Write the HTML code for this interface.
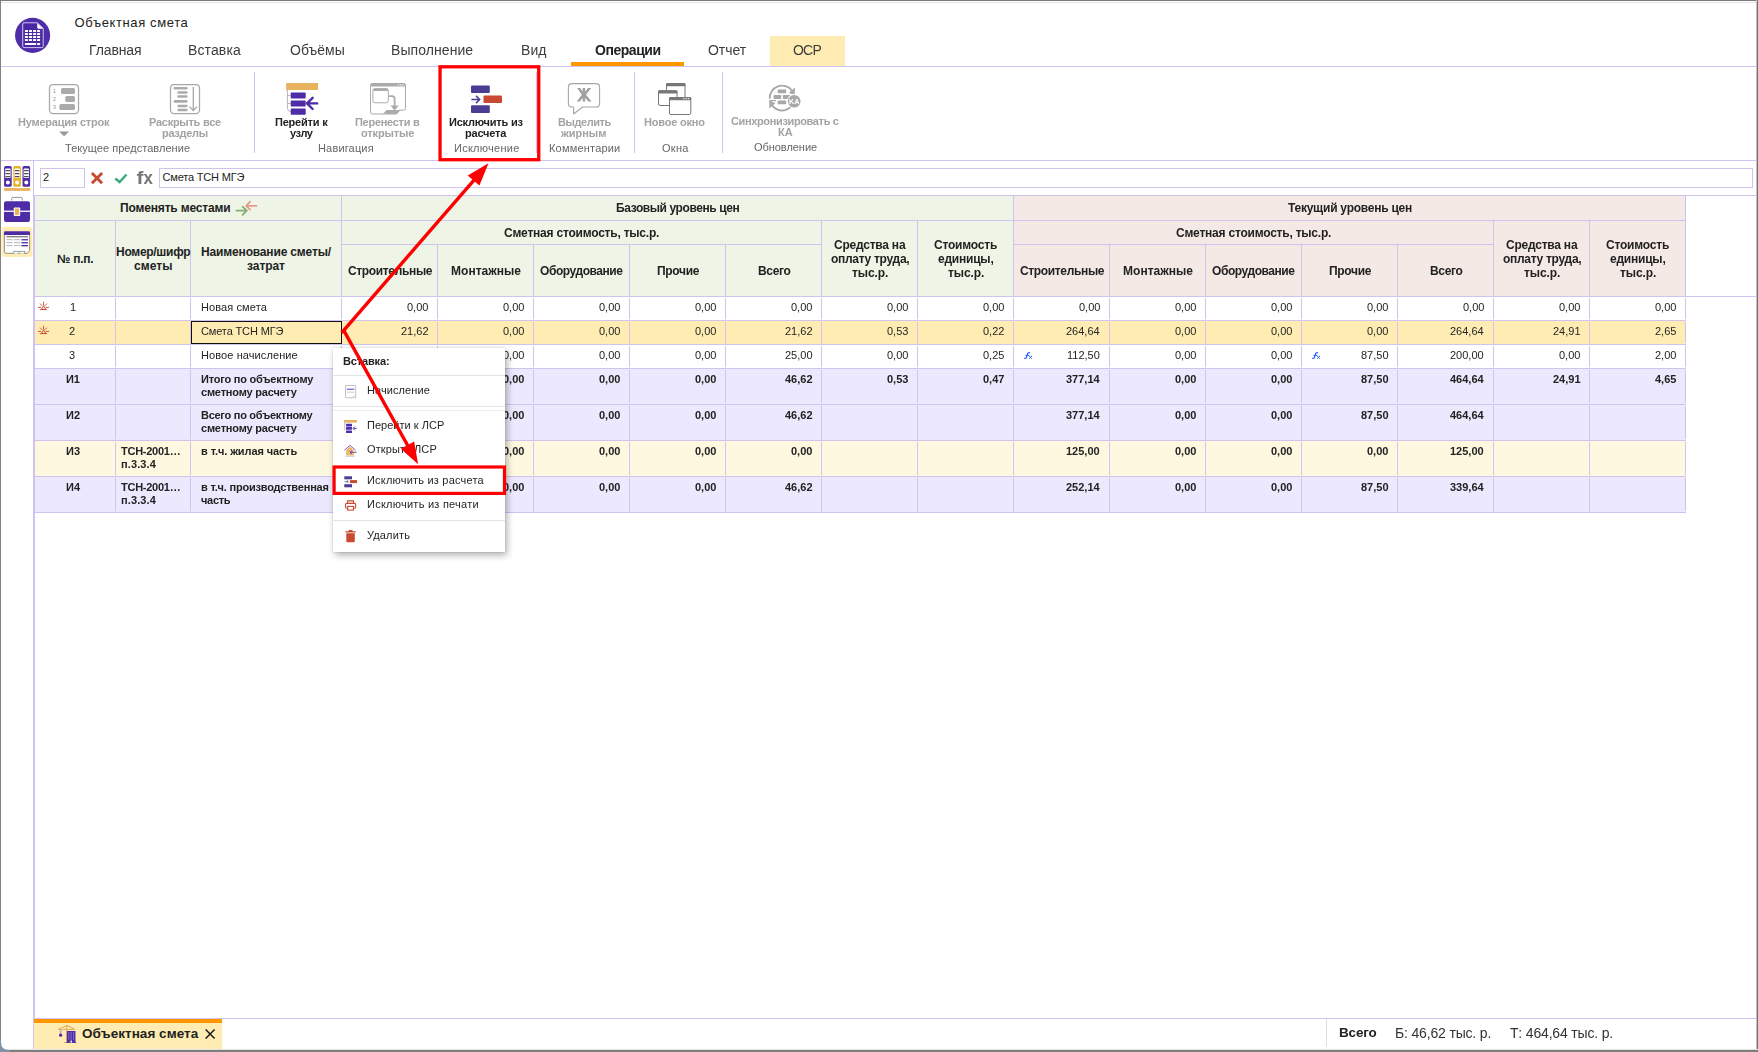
<!DOCTYPE html>
<html><head><meta charset="utf-8"><title>Объектная смета</title>
<style>
html,body{margin:0;padding:0;}
body{width:1758px;height:1052px;overflow:hidden;background:#fff;font-family:"Liberation Sans", sans-serif;position:relative;}
div,span,svg{position:absolute;box-sizing:border-box;}
.t{white-space:pre;display:block;}
.g{will-change:transform;}
</style></head><body>
<div style="left:0px;top:0px;width:1758px;height:1px;background:#787878;"></div>
<div style="left:0px;top:2px;width:1758px;height:1px;background:#e5e7e5;"></div>
<div style="left:0px;top:0px;width:1px;height:1052px;background:#828282;"></div>
<div style="left:1756px;top:0px;width:1px;height:1052px;background:#c4c4c4;"></div>
<div style="left:1757px;top:0px;width:1px;height:1052px;background:#707070;"></div>
<div style="left:0px;top:1049px;width:1758px;height:1px;background:#e4e4e4;"></div>
<div style="left:0px;top:1050px;width:1758px;height:2px;background:#7e7e7e;"></div>
<svg style="left:0;top:1040px" width="10" height="12" viewBox="0 0 10 12"><path d="M0 0 V12 H10 V10 H9 Q1 10 1 2 V0 Z" fill="#8092a6"/><path d="M0 0 H1 V2 Q1 10 9 10 H10 V12 H0 Z" fill="none"/></svg>
<svg style="left:0;top:0" width="64" height="64" viewBox="0 0 64 64">
<circle cx="32.6" cy="35.4" r="17.55" fill="#4f2ca8"/>
<path d="M24.2 28.8 H38 L37.4 23.6 H24.2 Z M24.2 28.6 H42.8 V47 H24.2 Z" fill="#4424a0" opacity="0.55"/>
<path d="M23.9 22.8 H37.3 L43.2 28.4 V46.3 Q43.2 47.6 41.9 47.6 H23.9 Q22.7 47.6 22.7 46.3 V24 Q22.7 22.8 23.9 22.8 Z" fill="none" stroke="#cfc4ea" stroke-width="1"/>
<path d="M37.2 22.9 L43.3 28.7 H38.3 Q37.2 28.7 37.2 27.6 Z" fill="#fff"/>
<g fill="#fff"><rect x="24.9" y="29.9" width="3.1" height="2" rx="0.4"/><rect x="28.95" y="29.9" width="3.1" height="2" rx="0.4"/><rect x="33.0" y="29.9" width="3.1" height="2" rx="0.4"/><rect x="37.0" y="29.9" width="3.1" height="2" rx="0.4"/><rect x="24.9" y="33.0" width="3.1" height="2" rx="0.4"/><rect x="28.95" y="33.0" width="3.1" height="2" rx="0.4"/><rect x="33.0" y="33.0" width="3.1" height="2" rx="0.4"/><rect x="37.0" y="33.0" width="3.1" height="2" rx="0.4"/><rect x="24.9" y="36.05" width="3.1" height="2" rx="0.4"/><rect x="28.95" y="36.05" width="3.1" height="2" rx="0.4"/><rect x="33.0" y="36.05" width="3.1" height="2" rx="0.4"/><rect x="37.0" y="36.05" width="3.1" height="2" rx="0.4"/><rect x="24.9" y="39.1" width="3.1" height="2" rx="0.4"/><rect x="28.95" y="39.1" width="3.1" height="2" rx="0.4"/><rect x="33.0" y="39.1" width="3.1" height="2" rx="0.4"/><rect x="37.0" y="39.1" width="3.1" height="2" rx="0.4"/><rect x="24.9" y="43" width="11.2" height="2" rx="0.4"/><rect x="37" y="43" width="3.1" height="2" rx="0.4"/></g>
</svg>
<span class="t" style="left:74.55px;top:15px;font-size:13px;line-height:15px;height:15px;color:#222;letter-spacing:0.620px;">Объектная смета</span>
<span class="t g" style="left:88.81px;top:42px;font-size:14px;line-height:16px;height:16px;color:#3c3c3c;letter-spacing:-0.117px;">Главная</span>
<span class="t g" style="left:188.21px;top:42px;font-size:14px;line-height:16px;height:16px;color:#3c3c3c;letter-spacing:0.119px;">Вставка</span>
<span class="t g" style="left:289.51px;top:42px;font-size:14px;line-height:16px;height:16px;color:#3c3c3c;letter-spacing:0.018px;">Объёмы</span>
<span class="t g" style="left:391.31px;top:42px;font-size:14px;line-height:16px;height:16px;color:#3c3c3c;letter-spacing:0.070px;">Выполнение</span>
<span class="t g" style="left:520.71px;top:42px;font-size:14px;line-height:16px;height:16px;color:#3c3c3c;letter-spacing:0.084px;">Вид</span>
<div style="left:571px;top:62px;width:113px;height:4px;background:#ff9800;"></div>
<span class="t g" style="left:594.51px;top:42px;font-size:14px;line-height:16px;height:16px;color:#222;font-weight:700;letter-spacing:-0.465px;">Операции</span>
<span class="t g" style="left:707.51px;top:42px;font-size:14px;line-height:16px;height:16px;color:#3c3c3c;letter-spacing:-0.033px;">Отчет</span>
<div style="left:770px;top:36px;width:75px;height:30px;background:#ffecb3;"></div>
<span class="t g" style="left:793.31px;top:42px;font-size:14px;line-height:16px;height:16px;color:#3c3c3c;letter-spacing:-0.788px;">ОСР</span>
<div style="left:1px;top:66px;width:1755px;height:1px;background:#d0c4ee;"></div>
<div style="left:254px;top:72px;width:1px;height:81px;background:#d0c4ee;"></div>
<div style="left:634px;top:72px;width:1px;height:81px;background:#d0c4ee;"></div>
<div style="left:722px;top:72px;width:1px;height:81px;background:#d0c4ee;"></div>
<div style="left:536px;top:72px;width:1px;height:81px;background:#d0c4ee;"></div>
<svg style="left:0;top:0" width="860" height="161" viewBox="0 0 860 161">
<g fill="none" stroke="#a8a8a8" stroke-width="1.25">
 <rect x="49.5" y="84.5" width="29" height="29" rx="3.5" fill="#fff"/>
 <rect x="170.5" y="84.5" width="29" height="29" rx="3.5" fill="#fff"/>
</g>
<g fill="#ababab">
 <rect x="61" y="88" width="14" height="6" rx="1.6"/>
 <rect x="65.3" y="96" width="9.7" height="6" rx="1.6"/>
 <rect x="59.4" y="104" width="15.6" height="6" rx="1.6"/>
 <rect x="173.6" y="87" width="14" height="2.6" rx="1.3"/>
 <rect x="177.3" y="91.2" width="10.3" height="2.5" rx="1.2"/>
 <rect x="177.3" y="95.2" width="10.3" height="2.5" rx="1.2"/>
 <rect x="173.6" y="100.1" width="14" height="2.6" rx="1.3"/>
 <rect x="177.3" y="104.7" width="10.3" height="2.6" rx="1.2"/>
 <rect x="177.3" y="108.8" width="10.3" height="2.5" rx="1.2"/>
 <path d="M59 131.5 H69.2 L64.1 136.2 Z" fill="#999"/>
</g>
<g font-family="Liberation Sans, sans-serif" font-size="5.2" fill="#8c8c8c" text-anchor="middle">
 <text x="54.5" y="93">1</text><text x="54.5" y="100.8">2</text><text x="54.5" y="108.6">3</text>
</g>
<path d="M193.3 87 V110.4 M189.6 106.6 L193.3 110.6 L197 106.6" fill="none" stroke="#a6a6a6" stroke-width="1.3"/>

<!-- goto node -->
<rect x="286.2" y="83" width="31.8" height="7" fill="#e8b25f"/>
<path d="M287.4 90 V108 Q287.4 111.6 290.7 111.6 M287.4 95.4 H290.7 M287.4 103.5 H290.7" fill="none" stroke="#9a9a9a" stroke-width="0.7"/>
<g fill="#4e2ca8">
 <rect x="290.7" y="92.4" width="15" height="6.1" rx="1"/>
 <rect x="290.7" y="100.5" width="15" height="6.1" rx="1"/>
 <rect x="290.7" y="108.6" width="15" height="6.1" rx="1"/>
</g>
<path d="M317.2 103.4 H308 M312.6 97.8 L307 103.4 L312.6 109" fill="none" stroke="#4e2ca8" stroke-width="2.4" stroke-linecap="round" stroke-linejoin="round"/>

<!-- move to open -->
<g fill="none" stroke="#ababab" stroke-width="1">
 <path d="M372.5 83.5 H403.5 Q405.5 83.5 405.5 85.5 V108.5 Q405.5 110.2 403.8 110.2 H399 M383.5 114 H372.5 Q370.5 114 370.5 112 V85.5 Q370.5 83.5 372.5 83.5" />
 <rect x="372.9" y="88.6" width="15.4" height="14.2" rx="2.2" fill="#fff"/>
</g>
<rect x="370.5" y="83.3" width="35" height="3.2" rx="1.5" fill="#ababab"/>
<rect x="373" y="88.4" width="15.2" height="2.6" rx="1.2" fill="#ababab"/>
<g fill="#fff"><rect x="397.8" y="84.4" width="1.4" height="1"/><rect x="400" y="84.4" width="1.4" height="1"/><rect x="402.2" y="84.4" width="1.4" height="1"/></g>
<path d="M389 96.2 H392 Q394.6 96.2 394.6 98.8 V106.5" fill="none" stroke="#ababab" stroke-width="1.8"/>
<path d="M390.4 105.6 H398.8 L394.6 110.4 Z" fill="#ababab"/>
<path d="M386.5 110 H400.5 L396.6 114.4 H382.6 Z" fill="#ababab"/>

<!-- exclude from calc -->
<rect x="471" y="85.6" width="18.8" height="7.4" rx="1" fill="#4b3d94"/>
<rect x="471" y="105.3" width="18.8" height="7.6" rx="1" fill="#4b3d94"/>
<rect x="483.5" y="95.5" width="18.5" height="7.6" rx="1" fill="#c84b31"/>
<path d="M471.4 99.5 H479.2 M476 95.9 L479.7 99.5 L476 103.1" fill="none" stroke="#4b3d94" stroke-width="1.5"/>

<!-- bold bubble -->
<path d="M572 83.6 H596 Q599.6 83.6 599.6 87.2 V103.4 Q599.6 107 596 107 H582.6 L573.6 114 V107 H572 Q568.4 107 568.4 103.4 V87.2 Q568.4 83.6 572 83.6 Z" fill="#fff" stroke="#a6a6a6" stroke-width="1.1" stroke-linejoin="round"/>
<clipPath id="zhc"><rect x="575" y="88.1" width="18" height="13.3"/></clipPath><g clip-path="url(#zhc)"><path d="M583.9 87 V102.5 M578 87.1 L583.4 94.8 L577.6 102.4 M590.3 87.1 L584.4 94.8 L590.6 102.4" fill="none" stroke="#a0a0a0" stroke-width="2.5" stroke-linejoin="round"/></g>

<!-- new window -->
<g fill="#fff" stroke="#777" stroke-width="1">
 <rect x="666.5" y="83.5" width="18.5" height="16" rx="1.5"/>
 <rect x="658.5" y="90.8" width="18.5" height="14.7" rx="1.5"/>
 <rect x="669.5" y="97.5" width="21.3" height="17" rx="1.5"/>
</g>
<g fill="#777">
 <rect x="666" y="83" width="19.5" height="3.3" rx="1.4"/>
 <rect x="658" y="90.3" width="19.5" height="3.3" rx="1.4"/>
 <rect x="669" y="97" width="22.3" height="3.3" rx="1.4"/>
</g>
<g fill="#fff"><rect x="683" y="98.2" width="1.4" height="1"/><rect x="685.4" y="98.2" width="1.4" height="1"/><rect x="687.8" y="98.2" width="1.4" height="1"/></g>

<!-- sync KA -->
<g fill="none" stroke="#a8a8a8" stroke-width="1.8">
 <path d="M769.7 98.6 A12.4 12.4 0 0 1 792 90.6"/>
 <path d="M794.4 98 A12.4 12.4 0 0 1 772 105.4"/>
</g>
<path d="M788.8 92.8 L795 87.6 L794.6 95.6 Z" fill="#a8a8a8"/>
<path d="M775.4 103.2 L769.2 108.4 L769.4 100.6 Z" fill="#a8a8a8"/>
<path d="M769.2 100.6 H776" stroke="#a8a8a8" stroke-width="1.3" fill="none"/>
<g fill="#a8a8a8">
 <rect x="777.7" y="89.4" width="8.5" height="3.9" rx="0.7"/>
 <rect x="773.6" y="95" width="7.6" height="4" rx="0.7"/>
 <rect x="782.8" y="95" width="7.6" height="4" rx="0.7"/>
 <rect x="777.7" y="100.4" width="8.5" height="3.9" rx="0.7"/>
</g>
<circle cx="794.2" cy="101.3" r="7.2" fill="#fff"/>
<circle cx="794.2" cy="101.3" r="6.3" fill="#a8a8a8"/>
<text x="794.2" y="103.9" font-family="Liberation Sans, sans-serif" font-size="7.2" font-weight="700" fill="#fff" text-anchor="middle">KA</text>
</svg>

<span class="t g" style="left:18.41px;top:116px;font-size:11px;line-height:12px;height:12px;color:#a3a3a3;font-weight:700;letter-spacing:-0.213px;">Нумерация строк</span>
<span class="t g" style="left:149.12px;top:116px;font-size:11px;line-height:12px;height:12px;color:#a3a3a3;font-weight:700;letter-spacing:-0.260px;">Раскрыть все</span>
<span class="t g" style="left:162.12px;top:127px;font-size:11px;line-height:12px;height:12px;color:#a3a3a3;font-weight:700;letter-spacing:-0.307px;">разделы</span>
<span class="t g" style="left:64.61px;top:142px;font-size:11px;line-height:12px;height:12px;color:#666;letter-spacing:0.039px;">Текущее представление</span>
<span class="t g" style="left:275.42px;top:116px;font-size:11px;line-height:12px;height:12px;color:#222;font-weight:700;letter-spacing:-0.208px;">Перейти к</span>
<span class="t g" style="left:290.42px;top:127px;font-size:11px;line-height:12px;height:12px;color:#222;font-weight:700;letter-spacing:-0.449px;">узлу</span>
<span class="t g" style="left:355.42px;top:116px;font-size:11px;line-height:12px;height:12px;color:#a3a3a3;font-weight:700;letter-spacing:-0.283px;">Перенести в</span>
<span class="t g" style="left:360.92px;top:127px;font-size:11px;line-height:12px;height:12px;color:#a3a3a3;font-weight:700;letter-spacing:-0.136px;">открытые</span>
<span class="t g" style="left:317.62px;top:142px;font-size:11px;line-height:12px;height:12px;color:#666;letter-spacing:0.158px;">Навигация</span>
<span class="t g" style="left:449.12px;top:116px;font-size:11px;line-height:12px;height:12px;color:#222;font-weight:700;letter-spacing:-0.204px;">Исключить из</span>
<span class="t g" style="left:465.42px;top:127px;font-size:11px;line-height:12px;height:12px;color:#222;font-weight:700;letter-spacing:-0.182px;">расчета</span>
<span class="t g" style="left:454.12px;top:142px;font-size:11px;line-height:12px;height:12px;color:#666;letter-spacing:0.260px;">Исключение</span>
<span class="t g" style="left:557.62px;top:116px;font-size:11px;line-height:12px;height:12px;color:#a3a3a3;font-weight:700;letter-spacing:-0.447px;">Выделить</span>
<span class="t g" style="left:561.41px;top:127px;font-size:11px;line-height:12px;height:12px;color:#a3a3a3;font-weight:700;letter-spacing:-0.033px;">жирным</span>
<span class="t g" style="left:548.91px;top:142px;font-size:11px;line-height:12px;height:12px;color:#666;letter-spacing:0.198px;">Комментарии</span>
<span class="t g" style="left:643.91px;top:116px;font-size:11px;line-height:12px;height:12px;color:#a3a3a3;font-weight:700;letter-spacing:-0.200px;">Новое окно</span>
<span class="t g" style="left:661.62px;top:142px;font-size:11px;line-height:12px;height:12px;color:#666;letter-spacing:0.302px;">Окна</span>
<span class="t g" style="left:730.91px;top:115px;font-size:11px;line-height:12px;height:12px;color:#a3a3a3;font-weight:700;letter-spacing:-0.365px;">Синхронизировать с</span>
<span class="t g" style="left:777.62px;top:126px;font-size:11px;line-height:12px;height:12px;color:#a3a3a3;font-weight:700;letter-spacing:-0.051px;">КА</span>
<span class="t g" style="left:754.12px;top:141px;font-size:11px;line-height:12px;height:12px;color:#666;letter-spacing:-0.045px;">Обновление</span>
<div style="left:1px;top:160px;width:1755px;height:1px;background:#d0c4ee;"></div>
<div style="left:33px;top:161px;width:1px;height:888px;background:#d0c4ee;"></div>
<svg style="left:0;top:161px" width="34" height="100" viewBox="0 161 34 100"><rect x="4.1" y="166" width="7.6" height="20.8" rx="1.6" fill="#4e2ca8"/><rect x="5.199999999999999" y="168.6" width="5.4" height="9.5" rx="0.8" fill="#fff"/><rect x="5.6" y="170.1" width="4.6" height="1.1" fill="#3c3c3c"/><rect x="5.6" y="173.1" width="4.6" height="1.1" fill="#3c3c3c"/><rect x="5.6" y="176.1" width="4.6" height="1.1" fill="#3c3c3c"/><circle cx="7.8999999999999995" cy="182.5" r="2" fill="#fff"/><rect x="13.3" y="166" width="7.6" height="20.8" rx="1.6" fill="#e6b422"/><rect x="14.4" y="168.6" width="5.4" height="9.5" rx="0.8" fill="#fff"/><rect x="14.8" y="170.1" width="4.6" height="1.1" fill="#3c3c3c"/><rect x="14.8" y="173.1" width="4.6" height="1.1" fill="#3c3c3c"/><rect x="14.8" y="176.1" width="4.6" height="1.1" fill="#3c3c3c"/><circle cx="17.1" cy="182.5" r="2" fill="#fff"/><rect x="22.5" y="166" width="7.6" height="20.8" rx="1.6" fill="#4e2ca8"/><rect x="23.6" y="168.6" width="5.4" height="9.5" rx="0.8" fill="#fff"/><rect x="24.0" y="170.1" width="4.6" height="1.1" fill="#3c3c3c"/><rect x="24.0" y="173.1" width="4.6" height="1.1" fill="#3c3c3c"/><rect x="24.0" y="176.1" width="4.6" height="1.1" fill="#3c3c3c"/><circle cx="26.3" cy="182.5" r="2" fill="#fff"/><rect x="4" y="188.1" width="26.1" height="2.8" fill="#e8b25f"/><path d="M11.7 200.6 V198.6 Q11.7 197.4 12.9 197.4 H21.1 Q22.3 197.4 22.3 198.6 V200.6" fill="none" stroke="#8a8a8a" stroke-width="0.9"/><rect x="4" y="201.3" width="26" height="20.6" rx="2" fill="#4e2ca8"/><rect x="4" y="210.6" width="26" height="1.3" fill="#fff"/><rect x="13.8" y="207.4" width="6.4" height="8.7" rx="0.8" fill="#fff"/><rect x="14.9" y="208.5" width="4.3" height="6.5" fill="#e8b25f"/><rect x="1.5" y="227" width="31" height="30" rx="3.5" fill="#ffecb3"/><path d="M4.4 233 H29.6 V250.4 L27.2 253.3 H6 Q4.4 253.3 4.4 251.7 Z" fill="#fff" stroke="#777" stroke-width="0.8"/><path d="M4 232.4 Q4 231.2 5.2 231.2 H28.8 Q30 231.2 30 232.4 V234.9 H4 Z" fill="#4e2ca8"/><rect x="6.4" y="236.2" width="21.6" height="1.1" fill="#666"/><rect x="6.4" y="239.2" width="6.2" height="1" fill="#b5b5b5"/><rect x="14" y="239.2" width="6.2" height="1" fill="#b5b5b5"/><rect x="21.4" y="239.1" width="6.6" height="1.3" fill="#4e2ca8"/><rect x="6.4" y="242.2" width="6.2" height="1" fill="#b5b5b5"/><rect x="14" y="242.2" width="6.2" height="1" fill="#b5b5b5"/><rect x="21.4" y="242.1" width="6.6" height="1.3" fill="#4e2ca8"/><rect x="6.4" y="245.1" width="6.2" height="1" fill="#b5b5b5"/><rect x="14" y="245.1" width="6.2" height="1" fill="#b5b5b5"/><rect x="21.4" y="245.0" width="6.6" height="1.3" fill="#4e2ca8"/><path d="M13 253.6 L13.8 251.4 H25 L24.4 253.6 M19 251.4 V253.6" fill="#fff" stroke="#777" stroke-width="0.7"/></svg>
<div style="left:40px;top:168px;width:45px;height:20px;background:#fff;border:1px solid #d0c4ee;"></div>
<span class="t" style="left:43.12px;top:171px;font-size:11px;line-height:12px;height:12px;color:#222;letter-spacing:0.345px;">2</span>
<div style="left:159px;top:168px;width:1594px;height:20px;background:#fff;border:1px solid #d0c4ee;"></div>
<span class="t" style="left:162.52px;top:171px;font-size:11px;line-height:12px;height:12px;color:#222;letter-spacing:-0.183px;">Смета ТСН МГЭ</span>
<div style="left:34px;top:195px;width:1722px;height:1px;background:#d0c4ee;"></div>
<div style="left:34px;top:196px;width:979px;height:100px;background:#eef5e6;"></div>
<div style="left:1013px;top:196px;width:672px;height:100px;background:#f5e9e5;"></div>
<div style="left:34px;top:321px;width:1651px;height:23px;background:#ffecb3;"></div>
<div style="left:34px;top:369px;width:1651px;height:35px;background:#ece8fd;"></div>
<div style="left:34px;top:405px;width:1651px;height:35px;background:#ece8fd;"></div>
<div style="left:34px;top:441px;width:1651px;height:35px;background:#fff8e1;"></div>
<div style="left:34px;top:477px;width:1651px;height:35px;background:#ece8fd;"></div>
<div style="left:34px;top:196px;width:1px;height:822px;background:#d0c4ee;"></div>
<div style="left:34px;top:220px;width:1652px;height:1px;background:#d0c4ee;"></div>
<div style="left:341px;top:244px;width:480px;height:1px;background:#d0c4ee;"></div>
<div style="left:1013px;top:244px;width:480px;height:1px;background:#d0c4ee;"></div>
<div style="left:34px;top:296px;width:1722px;height:1px;background:#d0c4ee;"></div>
<div style="left:34px;top:320px;width:1652px;height:1px;background:#d0c4ee;"></div>
<div style="left:34px;top:344px;width:1652px;height:1px;background:#d0c4ee;"></div>
<div style="left:34px;top:368px;width:1652px;height:1px;background:#d0c4ee;"></div>
<div style="left:34px;top:404px;width:1652px;height:1px;background:#d0c4ee;"></div>
<div style="left:34px;top:440px;width:1652px;height:1px;background:#d0c4ee;"></div>
<div style="left:34px;top:476px;width:1652px;height:1px;background:#d0c4ee;"></div>
<div style="left:34px;top:512px;width:1652px;height:1px;background:#d0c4ee;"></div>
<div style="left:115px;top:221px;width:1px;height:76px;background:#d0c4ee;"></div>
<div style="left:190px;top:221px;width:1px;height:76px;background:#d0c4ee;"></div>
<div style="left:341px;top:196px;width:1px;height:101px;background:#d0c4ee;"></div>
<div style="left:1013px;top:196px;width:1px;height:101px;background:#d0c4ee;"></div>
<div style="left:1685px;top:196px;width:1px;height:101px;background:#d0c4ee;"></div>
<div style="left:437px;top:245px;width:1px;height:52px;background:#d0c4ee;"></div>
<div style="left:533px;top:245px;width:1px;height:52px;background:#d0c4ee;"></div>
<div style="left:629px;top:245px;width:1px;height:52px;background:#d0c4ee;"></div>
<div style="left:725px;top:245px;width:1px;height:52px;background:#d0c4ee;"></div>
<div style="left:1109px;top:245px;width:1px;height:52px;background:#d0c4ee;"></div>
<div style="left:1205px;top:245px;width:1px;height:52px;background:#d0c4ee;"></div>
<div style="left:1301px;top:245px;width:1px;height:52px;background:#d0c4ee;"></div>
<div style="left:1397px;top:245px;width:1px;height:52px;background:#d0c4ee;"></div>
<div style="left:821px;top:221px;width:1px;height:76px;background:#d0c4ee;"></div>
<div style="left:917px;top:221px;width:1px;height:76px;background:#d0c4ee;"></div>
<div style="left:1493px;top:221px;width:1px;height:76px;background:#d0c4ee;"></div>
<div style="left:1589px;top:221px;width:1px;height:76px;background:#d0c4ee;"></div>
<div style="left:115px;top:297px;width:1px;height:215px;background:rgba(208,196,238,0.3);"></div>
<div style="left:190px;top:297px;width:1px;height:215px;background:rgba(208,196,238,0.3);"></div>
<div style="left:341px;top:297px;width:1px;height:215px;background:rgba(208,196,238,0.3);"></div>
<div style="left:437px;top:297px;width:1px;height:215px;background:rgba(208,196,238,0.3);"></div>
<div style="left:533px;top:297px;width:1px;height:215px;background:rgba(208,196,238,0.3);"></div>
<div style="left:629px;top:297px;width:1px;height:215px;background:rgba(208,196,238,0.3);"></div>
<div style="left:725px;top:297px;width:1px;height:215px;background:rgba(208,196,238,0.3);"></div>
<div style="left:821px;top:297px;width:1px;height:215px;background:rgba(208,196,238,0.3);"></div>
<div style="left:917px;top:297px;width:1px;height:215px;background:rgba(208,196,238,0.3);"></div>
<div style="left:1013px;top:297px;width:1px;height:215px;background:rgba(208,196,238,0.3);"></div>
<div style="left:1109px;top:297px;width:1px;height:215px;background:rgba(208,196,238,0.3);"></div>
<div style="left:1205px;top:297px;width:1px;height:215px;background:rgba(208,196,238,0.3);"></div>
<div style="left:1301px;top:297px;width:1px;height:215px;background:rgba(208,196,238,0.3);"></div>
<div style="left:1397px;top:297px;width:1px;height:215px;background:rgba(208,196,238,0.3);"></div>
<div style="left:1493px;top:297px;width:1px;height:215px;background:rgba(208,196,238,0.3);"></div>
<div style="left:1589px;top:297px;width:1px;height:215px;background:rgba(208,196,238,0.3);"></div>
<div style="left:1685px;top:297px;width:1px;height:215px;background:rgba(208,196,238,0.3);"></div>
<div style="left:115px;top:298px;width:1px;height:21px;background:#d0c4ee;"></div>
<div style="left:115px;top:322px;width:1px;height:21px;background:#d0c4ee;"></div>
<div style="left:115px;top:346px;width:1px;height:21px;background:#d0c4ee;"></div>
<div style="left:115px;top:370px;width:1px;height:33px;background:#d0c4ee;"></div>
<div style="left:115px;top:406px;width:1px;height:33px;background:#d0c4ee;"></div>
<div style="left:115px;top:442px;width:1px;height:33px;background:#d0c4ee;"></div>
<div style="left:115px;top:478px;width:1px;height:33px;background:#d0c4ee;"></div>
<div style="left:190px;top:298px;width:1px;height:21px;background:#d0c4ee;"></div>
<div style="left:190px;top:322px;width:1px;height:21px;background:#d0c4ee;"></div>
<div style="left:190px;top:346px;width:1px;height:21px;background:#d0c4ee;"></div>
<div style="left:190px;top:370px;width:1px;height:33px;background:#d0c4ee;"></div>
<div style="left:190px;top:406px;width:1px;height:33px;background:#d0c4ee;"></div>
<div style="left:190px;top:442px;width:1px;height:33px;background:#d0c4ee;"></div>
<div style="left:190px;top:478px;width:1px;height:33px;background:#d0c4ee;"></div>
<div style="left:341px;top:298px;width:1px;height:21px;background:#d0c4ee;"></div>
<div style="left:341px;top:322px;width:1px;height:21px;background:#d0c4ee;"></div>
<div style="left:341px;top:346px;width:1px;height:21px;background:#d0c4ee;"></div>
<div style="left:341px;top:370px;width:1px;height:33px;background:#d0c4ee;"></div>
<div style="left:341px;top:406px;width:1px;height:33px;background:#d0c4ee;"></div>
<div style="left:341px;top:442px;width:1px;height:33px;background:#d0c4ee;"></div>
<div style="left:341px;top:478px;width:1px;height:33px;background:#d0c4ee;"></div>
<div style="left:437px;top:298px;width:1px;height:21px;background:#d0c4ee;"></div>
<div style="left:437px;top:322px;width:1px;height:21px;background:#d0c4ee;"></div>
<div style="left:437px;top:346px;width:1px;height:21px;background:#d0c4ee;"></div>
<div style="left:437px;top:370px;width:1px;height:33px;background:#d0c4ee;"></div>
<div style="left:437px;top:406px;width:1px;height:33px;background:#d0c4ee;"></div>
<div style="left:437px;top:442px;width:1px;height:33px;background:#d0c4ee;"></div>
<div style="left:437px;top:478px;width:1px;height:33px;background:#d0c4ee;"></div>
<div style="left:533px;top:298px;width:1px;height:21px;background:#d0c4ee;"></div>
<div style="left:533px;top:322px;width:1px;height:21px;background:#d0c4ee;"></div>
<div style="left:533px;top:346px;width:1px;height:21px;background:#d0c4ee;"></div>
<div style="left:533px;top:370px;width:1px;height:33px;background:#d0c4ee;"></div>
<div style="left:533px;top:406px;width:1px;height:33px;background:#d0c4ee;"></div>
<div style="left:533px;top:442px;width:1px;height:33px;background:#d0c4ee;"></div>
<div style="left:533px;top:478px;width:1px;height:33px;background:#d0c4ee;"></div>
<div style="left:629px;top:298px;width:1px;height:21px;background:#d0c4ee;"></div>
<div style="left:629px;top:322px;width:1px;height:21px;background:#d0c4ee;"></div>
<div style="left:629px;top:346px;width:1px;height:21px;background:#d0c4ee;"></div>
<div style="left:629px;top:370px;width:1px;height:33px;background:#d0c4ee;"></div>
<div style="left:629px;top:406px;width:1px;height:33px;background:#d0c4ee;"></div>
<div style="left:629px;top:442px;width:1px;height:33px;background:#d0c4ee;"></div>
<div style="left:629px;top:478px;width:1px;height:33px;background:#d0c4ee;"></div>
<div style="left:725px;top:298px;width:1px;height:21px;background:#d0c4ee;"></div>
<div style="left:725px;top:322px;width:1px;height:21px;background:#d0c4ee;"></div>
<div style="left:725px;top:346px;width:1px;height:21px;background:#d0c4ee;"></div>
<div style="left:725px;top:370px;width:1px;height:33px;background:#d0c4ee;"></div>
<div style="left:725px;top:406px;width:1px;height:33px;background:#d0c4ee;"></div>
<div style="left:725px;top:442px;width:1px;height:33px;background:#d0c4ee;"></div>
<div style="left:725px;top:478px;width:1px;height:33px;background:#d0c4ee;"></div>
<div style="left:821px;top:298px;width:1px;height:21px;background:#d0c4ee;"></div>
<div style="left:821px;top:322px;width:1px;height:21px;background:#d0c4ee;"></div>
<div style="left:821px;top:346px;width:1px;height:21px;background:#d0c4ee;"></div>
<div style="left:821px;top:370px;width:1px;height:33px;background:#d0c4ee;"></div>
<div style="left:821px;top:406px;width:1px;height:33px;background:#d0c4ee;"></div>
<div style="left:821px;top:442px;width:1px;height:33px;background:#d0c4ee;"></div>
<div style="left:821px;top:478px;width:1px;height:33px;background:#d0c4ee;"></div>
<div style="left:917px;top:298px;width:1px;height:21px;background:#d0c4ee;"></div>
<div style="left:917px;top:322px;width:1px;height:21px;background:#d0c4ee;"></div>
<div style="left:917px;top:346px;width:1px;height:21px;background:#d0c4ee;"></div>
<div style="left:917px;top:370px;width:1px;height:33px;background:#d0c4ee;"></div>
<div style="left:917px;top:406px;width:1px;height:33px;background:#d0c4ee;"></div>
<div style="left:917px;top:442px;width:1px;height:33px;background:#d0c4ee;"></div>
<div style="left:917px;top:478px;width:1px;height:33px;background:#d0c4ee;"></div>
<div style="left:1013px;top:298px;width:1px;height:21px;background:#d0c4ee;"></div>
<div style="left:1013px;top:322px;width:1px;height:21px;background:#d0c4ee;"></div>
<div style="left:1013px;top:346px;width:1px;height:21px;background:#d0c4ee;"></div>
<div style="left:1013px;top:370px;width:1px;height:33px;background:#d0c4ee;"></div>
<div style="left:1013px;top:406px;width:1px;height:33px;background:#d0c4ee;"></div>
<div style="left:1013px;top:442px;width:1px;height:33px;background:#d0c4ee;"></div>
<div style="left:1013px;top:478px;width:1px;height:33px;background:#d0c4ee;"></div>
<div style="left:1109px;top:298px;width:1px;height:21px;background:#d0c4ee;"></div>
<div style="left:1109px;top:322px;width:1px;height:21px;background:#d0c4ee;"></div>
<div style="left:1109px;top:346px;width:1px;height:21px;background:#d0c4ee;"></div>
<div style="left:1109px;top:370px;width:1px;height:33px;background:#d0c4ee;"></div>
<div style="left:1109px;top:406px;width:1px;height:33px;background:#d0c4ee;"></div>
<div style="left:1109px;top:442px;width:1px;height:33px;background:#d0c4ee;"></div>
<div style="left:1109px;top:478px;width:1px;height:33px;background:#d0c4ee;"></div>
<div style="left:1205px;top:298px;width:1px;height:21px;background:#d0c4ee;"></div>
<div style="left:1205px;top:322px;width:1px;height:21px;background:#d0c4ee;"></div>
<div style="left:1205px;top:346px;width:1px;height:21px;background:#d0c4ee;"></div>
<div style="left:1205px;top:370px;width:1px;height:33px;background:#d0c4ee;"></div>
<div style="left:1205px;top:406px;width:1px;height:33px;background:#d0c4ee;"></div>
<div style="left:1205px;top:442px;width:1px;height:33px;background:#d0c4ee;"></div>
<div style="left:1205px;top:478px;width:1px;height:33px;background:#d0c4ee;"></div>
<div style="left:1301px;top:298px;width:1px;height:21px;background:#d0c4ee;"></div>
<div style="left:1301px;top:322px;width:1px;height:21px;background:#d0c4ee;"></div>
<div style="left:1301px;top:346px;width:1px;height:21px;background:#d0c4ee;"></div>
<div style="left:1301px;top:370px;width:1px;height:33px;background:#d0c4ee;"></div>
<div style="left:1301px;top:406px;width:1px;height:33px;background:#d0c4ee;"></div>
<div style="left:1301px;top:442px;width:1px;height:33px;background:#d0c4ee;"></div>
<div style="left:1301px;top:478px;width:1px;height:33px;background:#d0c4ee;"></div>
<div style="left:1397px;top:298px;width:1px;height:21px;background:#d0c4ee;"></div>
<div style="left:1397px;top:322px;width:1px;height:21px;background:#d0c4ee;"></div>
<div style="left:1397px;top:346px;width:1px;height:21px;background:#d0c4ee;"></div>
<div style="left:1397px;top:370px;width:1px;height:33px;background:#d0c4ee;"></div>
<div style="left:1397px;top:406px;width:1px;height:33px;background:#d0c4ee;"></div>
<div style="left:1397px;top:442px;width:1px;height:33px;background:#d0c4ee;"></div>
<div style="left:1397px;top:478px;width:1px;height:33px;background:#d0c4ee;"></div>
<div style="left:1493px;top:298px;width:1px;height:21px;background:#d0c4ee;"></div>
<div style="left:1493px;top:322px;width:1px;height:21px;background:#d0c4ee;"></div>
<div style="left:1493px;top:346px;width:1px;height:21px;background:#d0c4ee;"></div>
<div style="left:1493px;top:370px;width:1px;height:33px;background:#d0c4ee;"></div>
<div style="left:1493px;top:406px;width:1px;height:33px;background:#d0c4ee;"></div>
<div style="left:1493px;top:442px;width:1px;height:33px;background:#d0c4ee;"></div>
<div style="left:1493px;top:478px;width:1px;height:33px;background:#d0c4ee;"></div>
<div style="left:1589px;top:298px;width:1px;height:21px;background:#d0c4ee;"></div>
<div style="left:1589px;top:322px;width:1px;height:21px;background:#d0c4ee;"></div>
<div style="left:1589px;top:346px;width:1px;height:21px;background:#d0c4ee;"></div>
<div style="left:1589px;top:370px;width:1px;height:33px;background:#d0c4ee;"></div>
<div style="left:1589px;top:406px;width:1px;height:33px;background:#d0c4ee;"></div>
<div style="left:1589px;top:442px;width:1px;height:33px;background:#d0c4ee;"></div>
<div style="left:1589px;top:478px;width:1px;height:33px;background:#d0c4ee;"></div>
<div style="left:1685px;top:298px;width:1px;height:21px;background:#d0c4ee;"></div>
<div style="left:1685px;top:322px;width:1px;height:21px;background:#d0c4ee;"></div>
<div style="left:1685px;top:346px;width:1px;height:21px;background:#d0c4ee;"></div>
<div style="left:1685px;top:370px;width:1px;height:33px;background:#d0c4ee;"></div>
<div style="left:1685px;top:406px;width:1px;height:33px;background:#d0c4ee;"></div>
<div style="left:1685px;top:442px;width:1px;height:33px;background:#d0c4ee;"></div>
<div style="left:1685px;top:478px;width:1px;height:33px;background:#d0c4ee;"></div>
<span class="t" style="left:120.08px;top:201px;font-size:12px;line-height:14px;height:14px;color:#222;font-weight:700;letter-spacing:-0.170px;">Поменять местами</span>
<span class="t g" style="left:615.88px;top:201px;font-size:12px;line-height:14px;height:14px;color:#222;font-weight:700;letter-spacing:-0.409px;">Базовый уровень цен</span>
<span class="t g" style="left:1287.88px;top:201px;font-size:12px;line-height:14px;height:14px;color:#222;font-weight:700;letter-spacing:-0.241px;">Текущий уровень цен</span>
<span class="t g" style="left:504.08px;top:226px;font-size:12px;line-height:14px;height:14px;color:#222;font-weight:700;letter-spacing:-0.218px;">Сметная стоимость, тыс.р.</span>
<span class="t g" style="left:1176.08px;top:226px;font-size:12px;line-height:14px;height:14px;color:#222;font-weight:700;letter-spacing:-0.218px;">Сметная стоимость, тыс.р.</span>
<span class="t" style="left:57.08px;top:252px;font-size:12px;line-height:14px;height:14px;color:#222;font-weight:700;letter-spacing:-0.256px;">№ п.п.</span>
<span class="t" style="left:116.08px;top:245px;font-size:12px;line-height:14px;height:14px;color:#222;font-weight:700;letter-spacing:-0.293px;">Номер/шифр</span>
<span class="t" style="left:134.08px;top:259px;font-size:12px;line-height:14px;height:14px;color:#222;font-weight:700;letter-spacing:0.027px;">сметы</span>
<span class="t" style="left:201.08px;top:245px;font-size:12px;line-height:14px;height:14px;color:#222;font-weight:700;letter-spacing:-0.161px;">Наименование сметы/</span>
<span class="t" style="left:247.08px;top:259px;font-size:12px;line-height:14px;height:14px;color:#222;font-weight:700;letter-spacing:-0.068px;">затрат</span>
<span class="t g" style="left:347.58px;top:264px;font-size:12px;line-height:14px;height:14px;color:#222;font-weight:700;letter-spacing:-0.348px;">Строительные</span>
<span class="t g" style="left:450.88px;top:264px;font-size:12px;line-height:14px;height:14px;color:#222;font-weight:700;letter-spacing:0.025px;">Монтажные</span>
<span class="t g" style="left:540.38px;top:264px;font-size:12px;line-height:14px;height:14px;color:#222;font-weight:700;letter-spacing:-0.435px;">Оборудование</span>
<span class="t g" style="left:656.58px;top:264px;font-size:12px;line-height:14px;height:14px;color:#222;font-weight:700;letter-spacing:-0.313px;">Прочие</span>
<span class="t g" style="left:757.88px;top:264px;font-size:12px;line-height:14px;height:14px;color:#222;font-weight:700;letter-spacing:-0.329px;">Всего</span>
<span class="t g" style="left:834.08px;top:238px;font-size:12px;line-height:14px;height:14px;color:#222;font-weight:700;letter-spacing:-0.226px;">Средства на</span>
<span class="t g" style="left:830.88px;top:252px;font-size:12px;line-height:14px;height:14px;color:#222;font-weight:700;letter-spacing:-0.290px;">оплату труда,</span>
<span class="t g" style="left:851.58px;top:266px;font-size:12px;line-height:14px;height:14px;color:#222;font-weight:700;letter-spacing:-0.076px;">тыс.р.</span>
<span class="t g" style="left:934.08px;top:238px;font-size:12px;line-height:14px;height:14px;color:#222;font-weight:700;letter-spacing:-0.198px;">Стоимость</span>
<span class="t g" style="left:937.88px;top:252px;font-size:12px;line-height:14px;height:14px;color:#222;font-weight:700;letter-spacing:-0.216px;">единицы,</span>
<span class="t g" style="left:947.58px;top:266px;font-size:12px;line-height:14px;height:14px;color:#222;font-weight:700;letter-spacing:-0.109px;">тыс.р.</span>
<span class="t g" style="left:1019.58px;top:264px;font-size:12px;line-height:14px;height:14px;color:#222;font-weight:700;letter-spacing:-0.348px;">Строительные</span>
<span class="t g" style="left:1122.88px;top:264px;font-size:12px;line-height:14px;height:14px;color:#222;font-weight:700;letter-spacing:0.025px;">Монтажные</span>
<span class="t g" style="left:1212.38px;top:264px;font-size:12px;line-height:14px;height:14px;color:#222;font-weight:700;letter-spacing:-0.435px;">Оборудование</span>
<span class="t g" style="left:1328.58px;top:264px;font-size:12px;line-height:14px;height:14px;color:#222;font-weight:700;letter-spacing:-0.313px;">Прочие</span>
<span class="t g" style="left:1429.88px;top:264px;font-size:12px;line-height:14px;height:14px;color:#222;font-weight:700;letter-spacing:-0.329px;">Всего</span>
<span class="t g" style="left:1506.08px;top:238px;font-size:12px;line-height:14px;height:14px;color:#222;font-weight:700;letter-spacing:-0.226px;">Средства на</span>
<span class="t g" style="left:1502.88px;top:252px;font-size:12px;line-height:14px;height:14px;color:#222;font-weight:700;letter-spacing:-0.290px;">оплату труда,</span>
<span class="t g" style="left:1523.58px;top:266px;font-size:12px;line-height:14px;height:14px;color:#222;font-weight:700;letter-spacing:-0.076px;">тыс.р.</span>
<span class="t g" style="left:1606.08px;top:238px;font-size:12px;line-height:14px;height:14px;color:#222;font-weight:700;letter-spacing:-0.198px;">Стоимость</span>
<span class="t g" style="left:1609.88px;top:252px;font-size:12px;line-height:14px;height:14px;color:#222;font-weight:700;letter-spacing:-0.216px;">единицы,</span>
<span class="t g" style="left:1619.58px;top:266px;font-size:12px;line-height:14px;height:14px;color:#222;font-weight:700;letter-spacing:-0.109px;">тыс.р.</span>
<span class="t g" style="left:406.68px;top:301px;font-size:11px;line-height:12px;height:12px;color:#242424;">0,00</span>
<span class="t g" style="left:502.68px;top:301px;font-size:11px;line-height:12px;height:12px;color:#242424;">0,00</span>
<span class="t g" style="left:598.68px;top:301px;font-size:11px;line-height:12px;height:12px;color:#242424;">0,00</span>
<span class="t g" style="left:694.68px;top:301px;font-size:11px;line-height:12px;height:12px;color:#242424;">0,00</span>
<span class="t g" style="left:790.68px;top:301px;font-size:11px;line-height:12px;height:12px;color:#242424;">0,00</span>
<span class="t g" style="left:886.68px;top:301px;font-size:11px;line-height:12px;height:12px;color:#242424;">0,00</span>
<span class="t g" style="left:982.68px;top:301px;font-size:11px;line-height:12px;height:12px;color:#242424;">0,00</span>
<span class="t g" style="left:1078.68px;top:301px;font-size:11px;line-height:12px;height:12px;color:#242424;">0,00</span>
<span class="t g" style="left:1174.68px;top:301px;font-size:11px;line-height:12px;height:12px;color:#242424;">0,00</span>
<span class="t g" style="left:1270.68px;top:301px;font-size:11px;line-height:12px;height:12px;color:#242424;">0,00</span>
<span class="t g" style="left:1366.68px;top:301px;font-size:11px;line-height:12px;height:12px;color:#242424;">0,00</span>
<span class="t g" style="left:1462.68px;top:301px;font-size:11px;line-height:12px;height:12px;color:#242424;">0,00</span>
<span class="t g" style="left:1558.68px;top:301px;font-size:11px;line-height:12px;height:12px;color:#242424;">0,00</span>
<span class="t g" style="left:1654.68px;top:301px;font-size:11px;line-height:12px;height:12px;color:#242424;">0,00</span>
<span class="t g" style="left:400.57px;top:325px;font-size:11px;line-height:12px;height:12px;color:#242424;">21,62</span>
<span class="t g" style="left:502.68px;top:325px;font-size:11px;line-height:12px;height:12px;color:#242424;">0,00</span>
<span class="t g" style="left:598.68px;top:325px;font-size:11px;line-height:12px;height:12px;color:#242424;">0,00</span>
<span class="t g" style="left:694.68px;top:325px;font-size:11px;line-height:12px;height:12px;color:#242424;">0,00</span>
<span class="t g" style="left:784.57px;top:325px;font-size:11px;line-height:12px;height:12px;color:#242424;">21,62</span>
<span class="t g" style="left:886.68px;top:325px;font-size:11px;line-height:12px;height:12px;color:#242424;">0,53</span>
<span class="t g" style="left:982.68px;top:325px;font-size:11px;line-height:12px;height:12px;color:#242424;">0,22</span>
<span class="t g" style="left:1066.44px;top:325px;font-size:11px;line-height:12px;height:12px;color:#242424;">264,64</span>
<span class="t g" style="left:1174.68px;top:325px;font-size:11px;line-height:12px;height:12px;color:#242424;">0,00</span>
<span class="t g" style="left:1270.68px;top:325px;font-size:11px;line-height:12px;height:12px;color:#242424;">0,00</span>
<span class="t g" style="left:1366.68px;top:325px;font-size:11px;line-height:12px;height:12px;color:#242424;">0,00</span>
<span class="t g" style="left:1450.44px;top:325px;font-size:11px;line-height:12px;height:12px;color:#242424;">264,64</span>
<span class="t g" style="left:1552.57px;top:325px;font-size:11px;line-height:12px;height:12px;color:#242424;">24,91</span>
<span class="t g" style="left:1654.68px;top:325px;font-size:11px;line-height:12px;height:12px;color:#242424;">2,65</span>
<span class="t g" style="left:502.68px;top:349px;font-size:11px;line-height:12px;height:12px;color:#242424;">0,00</span>
<span class="t g" style="left:598.68px;top:349px;font-size:11px;line-height:12px;height:12px;color:#242424;">0,00</span>
<span class="t g" style="left:694.68px;top:349px;font-size:11px;line-height:12px;height:12px;color:#242424;">0,00</span>
<span class="t g" style="left:784.57px;top:349px;font-size:11px;line-height:12px;height:12px;color:#242424;">25,00</span>
<span class="t g" style="left:886.68px;top:349px;font-size:11px;line-height:12px;height:12px;color:#242424;">0,00</span>
<span class="t g" style="left:982.68px;top:349px;font-size:11px;line-height:12px;height:12px;color:#242424;">0,25</span>
<span class="t g" style="left:1067.27px;top:349px;font-size:11px;line-height:12px;height:12px;color:#242424;">112,50</span>
<span class="t g" style="left:1174.68px;top:349px;font-size:11px;line-height:12px;height:12px;color:#242424;">0,00</span>
<span class="t g" style="left:1270.68px;top:349px;font-size:11px;line-height:12px;height:12px;color:#242424;">0,00</span>
<span class="t g" style="left:1360.57px;top:349px;font-size:11px;line-height:12px;height:12px;color:#242424;">87,50</span>
<span class="t g" style="left:1450.44px;top:349px;font-size:11px;line-height:12px;height:12px;color:#242424;">200,00</span>
<span class="t g" style="left:1558.68px;top:349px;font-size:11px;line-height:12px;height:12px;color:#242424;">0,00</span>
<span class="t g" style="left:1654.68px;top:349px;font-size:11px;line-height:12px;height:12px;color:#242424;">2,00</span>
<span class="t g" style="left:502.68px;top:373px;font-size:11px;line-height:12px;height:12px;color:#222;font-weight:700;">0,00</span>
<span class="t g" style="left:598.68px;top:373px;font-size:11px;line-height:12px;height:12px;color:#222;font-weight:700;">0,00</span>
<span class="t g" style="left:694.68px;top:373px;font-size:11px;line-height:12px;height:12px;color:#222;font-weight:700;">0,00</span>
<span class="t g" style="left:784.57px;top:373px;font-size:11px;line-height:12px;height:12px;color:#222;font-weight:700;">46,62</span>
<span class="t g" style="left:886.68px;top:373px;font-size:11px;line-height:12px;height:12px;color:#222;font-weight:700;">0,53</span>
<span class="t g" style="left:982.68px;top:373px;font-size:11px;line-height:12px;height:12px;color:#222;font-weight:700;">0,47</span>
<span class="t g" style="left:1066.44px;top:373px;font-size:11px;line-height:12px;height:12px;color:#222;font-weight:700;">377,14</span>
<span class="t g" style="left:1174.68px;top:373px;font-size:11px;line-height:12px;height:12px;color:#222;font-weight:700;">0,00</span>
<span class="t g" style="left:1270.68px;top:373px;font-size:11px;line-height:12px;height:12px;color:#222;font-weight:700;">0,00</span>
<span class="t g" style="left:1360.57px;top:373px;font-size:11px;line-height:12px;height:12px;color:#222;font-weight:700;">87,50</span>
<span class="t g" style="left:1450.44px;top:373px;font-size:11px;line-height:12px;height:12px;color:#222;font-weight:700;">464,64</span>
<span class="t g" style="left:1552.57px;top:373px;font-size:11px;line-height:12px;height:12px;color:#222;font-weight:700;">24,91</span>
<span class="t g" style="left:1654.68px;top:373px;font-size:11px;line-height:12px;height:12px;color:#222;font-weight:700;">4,65</span>
<span class="t g" style="left:502.68px;top:409px;font-size:11px;line-height:12px;height:12px;color:#222;font-weight:700;">0,00</span>
<span class="t g" style="left:598.68px;top:409px;font-size:11px;line-height:12px;height:12px;color:#222;font-weight:700;">0,00</span>
<span class="t g" style="left:694.68px;top:409px;font-size:11px;line-height:12px;height:12px;color:#222;font-weight:700;">0,00</span>
<span class="t g" style="left:784.57px;top:409px;font-size:11px;line-height:12px;height:12px;color:#222;font-weight:700;">46,62</span>
<span class="t g" style="left:1066.44px;top:409px;font-size:11px;line-height:12px;height:12px;color:#222;font-weight:700;">377,14</span>
<span class="t g" style="left:1174.68px;top:409px;font-size:11px;line-height:12px;height:12px;color:#222;font-weight:700;">0,00</span>
<span class="t g" style="left:1270.68px;top:409px;font-size:11px;line-height:12px;height:12px;color:#222;font-weight:700;">0,00</span>
<span class="t g" style="left:1360.57px;top:409px;font-size:11px;line-height:12px;height:12px;color:#222;font-weight:700;">87,50</span>
<span class="t g" style="left:1450.44px;top:409px;font-size:11px;line-height:12px;height:12px;color:#222;font-weight:700;">464,64</span>
<span class="t g" style="left:502.68px;top:445px;font-size:11px;line-height:12px;height:12px;color:#222;font-weight:700;">0,00</span>
<span class="t g" style="left:598.68px;top:445px;font-size:11px;line-height:12px;height:12px;color:#222;font-weight:700;">0,00</span>
<span class="t g" style="left:694.68px;top:445px;font-size:11px;line-height:12px;height:12px;color:#222;font-weight:700;">0,00</span>
<span class="t g" style="left:790.68px;top:445px;font-size:11px;line-height:12px;height:12px;color:#222;font-weight:700;">0,00</span>
<span class="t g" style="left:1066.44px;top:445px;font-size:11px;line-height:12px;height:12px;color:#222;font-weight:700;">125,00</span>
<span class="t g" style="left:1174.68px;top:445px;font-size:11px;line-height:12px;height:12px;color:#222;font-weight:700;">0,00</span>
<span class="t g" style="left:1270.68px;top:445px;font-size:11px;line-height:12px;height:12px;color:#222;font-weight:700;">0,00</span>
<span class="t g" style="left:1366.68px;top:445px;font-size:11px;line-height:12px;height:12px;color:#222;font-weight:700;">0,00</span>
<span class="t g" style="left:1450.44px;top:445px;font-size:11px;line-height:12px;height:12px;color:#222;font-weight:700;">125,00</span>
<span class="t g" style="left:502.68px;top:481px;font-size:11px;line-height:12px;height:12px;color:#222;font-weight:700;">0,00</span>
<span class="t g" style="left:598.68px;top:481px;font-size:11px;line-height:12px;height:12px;color:#222;font-weight:700;">0,00</span>
<span class="t g" style="left:694.68px;top:481px;font-size:11px;line-height:12px;height:12px;color:#222;font-weight:700;">0,00</span>
<span class="t g" style="left:784.57px;top:481px;font-size:11px;line-height:12px;height:12px;color:#222;font-weight:700;">46,62</span>
<span class="t g" style="left:1066.44px;top:481px;font-size:11px;line-height:12px;height:12px;color:#222;font-weight:700;">252,14</span>
<span class="t g" style="left:1174.68px;top:481px;font-size:11px;line-height:12px;height:12px;color:#222;font-weight:700;">0,00</span>
<span class="t g" style="left:1270.68px;top:481px;font-size:11px;line-height:12px;height:12px;color:#222;font-weight:700;">0,00</span>
<span class="t g" style="left:1360.57px;top:481px;font-size:11px;line-height:12px;height:12px;color:#222;font-weight:700;">87,50</span>
<span class="t g" style="left:1450.44px;top:481px;font-size:11px;line-height:12px;height:12px;color:#222;font-weight:700;">339,64</span>
<span class="t g" style="left:70.41px;top:301px;font-size:11px;line-height:12px;height:12px;color:#242424;letter-spacing:-1.555px;">1</span>
<span class="t g" style="left:69.21px;top:325px;font-size:11px;line-height:12px;height:12px;color:#242424;letter-spacing:0.445px;">2</span>
<span class="t g" style="left:69.21px;top:349px;font-size:11px;line-height:12px;height:12px;color:#242424;letter-spacing:0.445px;">3</span>
<span class="t g" style="left:200.81px;top:301px;font-size:11px;line-height:12px;height:12px;color:#242424;letter-spacing:0.100px;">Новая смета</span>
<span class="t g" style="left:200.62px;top:325px;font-size:11px;line-height:12px;height:12px;color:#242424;letter-spacing:-0.137px;">Смета ТСН МГЭ</span>
<span class="t g" style="left:200.81px;top:349px;font-size:11px;line-height:12px;height:12px;color:#242424;letter-spacing:0.093px;">Новое начисление</span>
<div style="left:191px;top:321px;width:151px;height:23px;border:1px solid #111;"></div>
<span class="t g" style="left:65.91px;top:373px;font-size:11px;line-height:12px;height:12px;color:#222;font-weight:700;letter-spacing:-0.131px;">И1</span>
<span class="t g" style="left:65.91px;top:409px;font-size:11px;line-height:12px;height:12px;color:#222;font-weight:700;letter-spacing:0.119px;">И2</span>
<span class="t g" style="left:65.91px;top:445px;font-size:11px;line-height:12px;height:12px;color:#222;font-weight:700;letter-spacing:0.119px;">И3</span>
<span class="t g" style="left:65.91px;top:481px;font-size:11px;line-height:12px;height:12px;color:#222;font-weight:700;letter-spacing:0.119px;">И4</span>
<span class="t g" style="left:200.81px;top:373px;font-size:11px;line-height:12px;height:12px;color:#222;font-weight:700;letter-spacing:-0.214px;">Итого по объектному</span>
<span class="t g" style="left:200.62px;top:386px;font-size:11px;line-height:12px;height:12px;color:#222;font-weight:700;letter-spacing:-0.190px;">сметному расчету</span>
<span class="t g" style="left:200.81px;top:409px;font-size:11px;line-height:12px;height:12px;color:#222;font-weight:700;letter-spacing:-0.272px;">Всего по объектному</span>
<span class="t g" style="left:200.62px;top:422px;font-size:11px;line-height:12px;height:12px;color:#222;font-weight:700;letter-spacing:-0.190px;">сметному расчету</span>
<span class="t g" style="left:120.91px;top:445px;font-size:11px;line-height:12px;height:12px;color:#222;font-weight:700;letter-spacing:-0.253px;">ТСН-2001…</span>
<span class="t g" style="left:120.91px;top:458px;font-size:11px;line-height:12px;height:12px;color:#222;font-weight:700;letter-spacing:0.114px;">п.3.3.4</span>
<span class="t g" style="left:200.62px;top:445px;font-size:11px;line-height:12px;height:12px;color:#222;font-weight:700;letter-spacing:-0.092px;">в т.ч. жилая часть</span>
<span class="t g" style="left:120.91px;top:481px;font-size:11px;line-height:12px;height:12px;color:#222;font-weight:700;letter-spacing:-0.253px;">ТСН-2001…</span>
<span class="t g" style="left:120.91px;top:494px;font-size:11px;line-height:12px;height:12px;color:#222;font-weight:700;letter-spacing:0.114px;">п.3.3.4</span>
<span class="t g" style="left:200.62px;top:481px;font-size:11px;line-height:12px;height:12px;color:#222;font-weight:700;letter-spacing:-0.193px;">в т.ч. производственная</span>
<span class="t g" style="left:200.62px;top:494px;font-size:11px;line-height:12px;height:12px;color:#222;font-weight:700;letter-spacing:-0.302px;">часть</span>
<svg style="left:0;top:161px" width="1758" height="360" viewBox="0 161 1758 360"><path d="M91.9 173 L102.1 183.2 M102.1 173 L91.9 183.2" stroke="#c84b31" stroke-width="2.9" fill="none"/><path d="M115.3 178.5 L119.6 182 L126.5 174.5" stroke="#3fa97c" stroke-width="2.5" fill="none"/><text x="136.6" y="184.2" font-family="Liberation Sans, sans-serif" font-size="19.2" font-weight="700" fill="#777" textLength="7" lengthAdjust="spacingAndGlyphs">f</text><text x="143.4" y="184.2" font-family="Liberation Sans, sans-serif" font-size="19.2" font-weight="700" fill="#777" textLength="9.4" lengthAdjust="spacingAndGlyphs">x</text><path d="M236.4 210.6 H246.6 M242.6 206.7 L246.8 210.6 L242.6 214.9" stroke="#86ad6c" stroke-width="1.7" fill="none" stroke-linecap="round" stroke-linejoin="round"/><path d="M256.5 205.9 H246.4 M250.1 201.7 L246.2 205.9 L250.1 209.7" stroke="#e59a8a" stroke-width="1.7" fill="none" stroke-linecap="round" stroke-linejoin="round"/><g stroke="#c84b31" stroke-width="0.9" fill="none" stroke-linecap="round"><path d="M43.5 302.2 V305.2 M40.4 303.9 L41.9 305.5 M46.6 303.9 L45.1 305.5 M38.3 307.4 H41 M46 307.4 H48.7 M40.3 309.6 H46.7"/><path d="M43.5 306.2 L41.6 309.4 H45.4 Z"/></g><g stroke="#c84b31" stroke-width="0.9" fill="none" stroke-linecap="round"><path d="M43.5 326.2 V329.2 M40.4 327.9 L41.9 329.5 M46.6 327.9 L45.1 329.5 M38.3 331.4 H41 M46 331.4 H48.7 M40.3 333.6 H46.7"/><path d="M43.5 330.2 L41.6 333.4 H45.4 Z"/></g><g fill="none" stroke="#2a5cff" stroke-linecap="round"><path d="M1024.60 358.30 Q1026.30 358.80 1026.70 356.60 L1027.60 353.60 Q1028.10 352.20 1029.60 352.80" stroke-width="1.2"/><path d="M1025.90 355.30 H1028.90" stroke-width="1"/><path d="M1029.40 356.20 L1031.60 358.50 M1031.80 356.20 L1029.30 358.50" stroke-width="0.9"/></g><g fill="none" stroke="#2a5cff" stroke-linecap="round"><path d="M1312.60 358.30 Q1314.30 358.80 1314.70 356.60 L1315.60 353.60 Q1316.10 352.20 1317.60 352.80" stroke-width="1.2"/><path d="M1313.90 355.30 H1316.90" stroke-width="1"/><path d="M1317.40 356.20 L1319.60 358.50 M1319.80 356.20 L1317.30 358.50" stroke-width="0.9"/></g></svg>
<div style="left:34px;top:1018px;width:1722px;height:1px;background:#d0c4ee;"></div>
<div style="left:34px;top:1019px;width:188px;height:30px;background:#ffecb3;"></div>
<div style="left:34px;top:1019px;width:188px;height:4px;background:#ff9800;"></div>
<span class="t" style="left:82.03px;top:1026px;font-size:13.5px;line-height:15px;height:15px;color:#222;font-weight:700;letter-spacing:0.041px;">Объектная смета</span>
<svg style="left:50px;top:1019px" width="180" height="30" viewBox="50 1019 180 30"><path d="M66.6 1025.3 V1042.6 M58.2 1029.5 H74.8 M58.4 1029.3 L67 1025.4 L74.6 1029.3 M63.6 1042.5 H66.8" stroke="#e8b25f" stroke-width="1.2" fill="none"/><path d="M60.6 1030.2 V1033.6" stroke="#a99be0" stroke-width="1.5"/><circle cx="60.6" cy="1035.2" r="1.6" fill="#4e2ca8"/><rect x="66.9" y="1031" width="8.6" height="11.2" fill="#4e2ca8"/><rect x="66.1" y="1042" width="10.2" height="0.9" fill="#4e2ca8"/><rect x="68.2" y="1032.4" width="1.2" height="1" fill="#a695de"/><rect x="70.6" y="1032.4" width="1.2" height="1" fill="#a695de"/><rect x="73" y="1032.4" width="1.2" height="1" fill="#a695de"/><rect x="68.2" y="1034.4" width="1.2" height="1" fill="#a695de"/><rect x="70.6" y="1034.4" width="1.2" height="1" fill="#a695de"/><rect x="73" y="1034.4" width="1.2" height="1" fill="#a695de"/><rect x="68.2" y="1036.4" width="1.2" height="1" fill="#a695de"/><rect x="70.6" y="1036.4" width="1.2" height="1" fill="#a695de"/><rect x="73" y="1036.4" width="1.2" height="1" fill="#a695de"/><rect x="68.2" y="1038.4" width="1.2" height="1" fill="#a695de"/><rect x="70.6" y="1038.4" width="1.2" height="1" fill="#a695de"/><rect x="73" y="1038.4" width="1.2" height="1" fill="#a695de"/><rect x="70.4" y="1040.6" width="1.6" height="1.9" fill="#fff3cf"/><path d="M205.6 1029.4 L214.6 1038.4 M214.6 1029.4 L205.6 1038.4" stroke="#111" stroke-width="1.4" fill="none"/></svg>
<div style="left:1326px;top:1019px;width:1px;height:28px;background:#ddd;"></div>
<span class="t g" style="left:1339.03px;top:1025px;font-size:13.5px;line-height:15px;height:15px;color:#222;font-weight:700;letter-spacing:-0.185px;">Всего</span>
<span class="t g" style="left:1394.81px;top:1025px;font-size:14px;line-height:16px;height:16px;color:#333;letter-spacing:-0.166px;">Б: 46,62 тыс. р.</span>
<span class="t g" style="left:1510.01px;top:1025px;font-size:14px;line-height:16px;height:16px;color:#333;letter-spacing:-0.177px;">Т: 464,64 тыс. р.</span>
<div style="left:333px;top:348px;width:172px;height:204px;background:#fff;box-shadow:2px 3px 7px rgba(0,0,0,.32), 0 0 1px rgba(0,0,0,.25);"></div>
<div style="left:333px;top:375px;width:172px;height:1px;background:#e4e4e4;"></div>
<div style="left:333px;top:406px;width:172px;height:1px;background:#e4e4e4;"></div>
<div style="left:333px;top:410px;width:172px;height:1px;background:#ececec;"></div>
<div style="left:333px;top:520px;width:172px;height:1px;background:#e4e4e4;"></div>
<span class="t g" style="left:343.42px;top:355px;font-size:11px;line-height:12px;height:12px;color:#222;font-weight:700;letter-spacing:-0.144px;">Вставка:</span>
<span class="t g" style="left:366.81px;top:384px;font-size:11px;line-height:12px;height:12px;color:#262626;letter-spacing:0.079px;">Начисление</span>
<span class="t g" style="left:366.81px;top:419px;font-size:11px;line-height:12px;height:12px;color:#262626;letter-spacing:0.027px;">Перейти к ЛСР</span>
<span class="t g" style="left:366.81px;top:443px;font-size:11px;line-height:12px;height:12px;color:#262626;letter-spacing:0.100px;">Открыть ЛСР</span>
<span class="t g" style="left:366.81px;top:474px;font-size:11px;line-height:12px;height:12px;color:#262626;letter-spacing:0.201px;">Исключить из расчета</span>
<span class="t g" style="left:366.81px;top:498px;font-size:11px;line-height:12px;height:12px;color:#262626;letter-spacing:0.245px;">Исключить из печати</span>
<span class="t g" style="left:366.81px;top:529px;font-size:11px;line-height:12px;height:12px;color:#262626;letter-spacing:0.153px;">Удалить</span>
<svg style="left:340px;top:380px" width="24" height="170" viewBox="340 380 24 170">
<!-- nachislenie -->
<path d="M345.5 385.5 H355.7 V397.7 H345.5 Z" fill="#fff" stroke="#bdbdbd" stroke-width="0.9"/>
<path d="M346.8 389.2 H354.4" stroke="#6a4fc0" stroke-width="1.1"/>
<path d="M346.8 392.2 H354.4" stroke="#cfcfcf" stroke-width="1"/>
<path d="M352.6 397.4 L353.6 395.8 H355.4" stroke="#cfcfcf" stroke-width="0.8" fill="none"/>
<!-- goto lsr -->
<rect x="344" y="420" width="13" height="2.6" fill="#e8b25f"/>
<path d="M344.6 422.6 V430" stroke="#aaa" stroke-width="0.7"/>
<g fill="#4e2ca8"><rect x="346" y="423.8" width="6" height="2.6" rx="0.5"/><rect x="346" y="427.1" width="6" height="2.6" rx="0.5"/><rect x="346" y="430.4" width="6" height="2.6" rx="0.5"/></g>
<path d="M356.8 428.4 H353.4 M355 426.4 L353 428.4 L355 430.4" stroke="#4e2ca8" stroke-width="0.9" fill="none"/>
<!-- open lsr -->
<path d="M346.2 450 L350 446.6 L353.8 450 V455.4 H346.2 Z" fill="#ecb868"/>
<path d="M344.3 450.3 L350 445.4 L355.7 450.3" stroke="#5a3eb5" stroke-width="0.8" fill="none"/>
<path d="M356.6 452.3 H350.2 M352 450.5 L350 452.3 L352 454.1" stroke="#5a3eb5" stroke-width="0.9" fill="none"/>
<path d="M345.2 456.2 H354.8" stroke="#c8c8c8" stroke-width="1"/>
<!-- exclude -->
<rect x="344.3" y="476.3" width="7.7" height="3" fill="#4b3d94"/>
<rect x="344.3" y="484.2" width="7.7" height="3.1" fill="#4b3d94"/>
<rect x="350" y="480.1" width="7" height="3" fill="#c84b31"/>
<path d="M344.6 481.6 H348.2 M346.8 480.2 L348.3 481.6 L346.8 483" stroke="#4b3d94" stroke-width="0.7" fill="none"/>
<!-- printer -->
<g fill="none" stroke="#c84b31" stroke-width="1.1">
 <path d="M347.6 503.4 V500.9 H353.6 V503.4"/>
 <rect x="345.5" y="503.4" width="10.2" height="4.8" rx="1.4"/>
 <rect x="347.7" y="506.4" width="5.8" height="3.7" fill="#fff"/>
</g>
<!-- trash -->
<path d="M345.4 531.2 H355.7 V532.4 H345.4 Z M348.6 530 H352.5 V531.3 H348.6 Z M346.3 533.3 H354.8 V541 Q354.8 542.2 353.6 542.2 H347.5 Q346.3 542.2 346.3 541 Z" fill="#c84b31"/>
</svg>

<svg style="left:0;top:0" width="600" height="560" viewBox="0 0 600 560"><rect x="440.05" y="66.8" width="98.7" height="92.9" fill="none" stroke="#f00" stroke-width="3.3"/><rect x="334.1" y="467" width="170.4" height="26.4" fill="none" stroke="#f00" stroke-width="3.2"/><path d="M341.60 332.80 L474.22 179.77" stroke="#f00" stroke-width="3.4" fill="none"/><path d="M488.50 163.30 L479.42 185.61 L467.71 175.45 Z" fill="#f00"/><path d="M343.30 329.60 L408.00 446.02" stroke="#f00" stroke-width="3.4" fill="none"/><path d="M418.10 464.20 L400.82 448.86 L414.20 441.43 Z" fill="#f00"/></svg>
</body></html>
